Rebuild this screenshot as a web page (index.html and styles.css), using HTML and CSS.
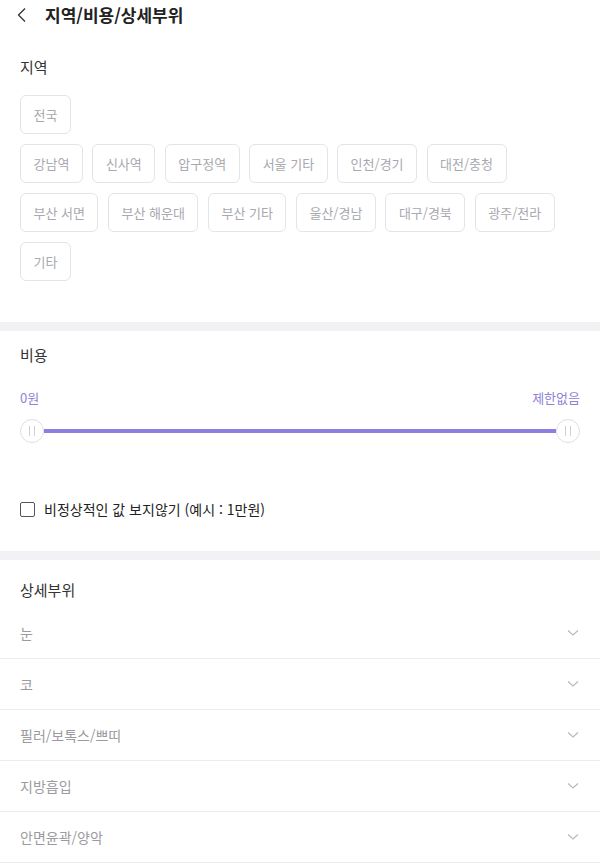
FILE: index.html
```html
<!DOCTYPE html>
<html lang="ko">
<head>
<meta charset="utf-8">
<link rel="stylesheet" href="styles.css">
</head>
<body>
<header class="topbar">
  <svg class="back" width="12" height="16" viewBox="0 0 12 16"><path d="M9 1.5 L2.5 8 L9 14.5" fill="none" stroke="#333" stroke-width="1.3"/></svg>
  <h1 class="title">지역/비용/상세부위</h1>
</header>

<section class="region">
  <h2 class="label">지역</h2>
  <div class="chips chips-top">
    <span class="chip">전국</span>
  </div>
  <div class="chips">
    <span class="chip">강남역</span>
    <span class="chip">신사역</span>
    <span class="chip">압구정역</span>
    <span class="chip">서울 기타</span>
    <span class="chip">인천/경기</span>
    <span class="chip">대전/충청</span>
    <span class="chip">부산 서면</span>
    <span class="chip">부산 해운대</span>
    <span class="chip">부산 기타</span>
    <span class="chip">울산/경남</span>
    <span class="chip">대구/경북</span>
    <span class="chip">광주/전라</span>
    <span class="chip">기타</span>
  </div>
</section>

<div class="band"></div>

<section class="cost">
  <h2 class="label">비용</h2>
  <div class="range-labels">
    <span>0원</span>
    <span>제한없음</span>
  </div>
  <div class="slider">
    <span class="thumb"><i></i><i></i></span>
    <span class="track"></span>
    <span class="thumb"><i></i><i></i></span>
  </div>
  <label class="check">
    <span class="box"></span>
    <span class="check-text">비정상적인 값 보지않기 (예시 : 1만원)</span>
  </label>
</section>

<div class="band"></div>

<section class="parts">
  <h2 class="label">상세부위</h2>
  <ul class="list">
    <li class="item"><span>눈</span><svg class="chev" width="12" height="8" viewBox="0 0 12 8"><path d="M1 1.5 L6 6 L11 1.5" fill="none" stroke="#b9b9bf" stroke-width="1.2"/></svg></li>
    <li class="item"><span>코</span><svg class="chev" width="12" height="8" viewBox="0 0 12 8"><path d="M1 1.5 L6 6 L11 1.5" fill="none" stroke="#b9b9bf" stroke-width="1.2"/></svg></li>
    <li class="item"><span>필러/보톡스/쁘띠</span><svg class="chev" width="12" height="8" viewBox="0 0 12 8"><path d="M1 1.5 L6 6 L11 1.5" fill="none" stroke="#b9b9bf" stroke-width="1.2"/></svg></li>
    <li class="item"><span>지방흡입</span><svg class="chev" width="12" height="8" viewBox="0 0 12 8"><path d="M1 1.5 L6 6 L11 1.5" fill="none" stroke="#b9b9bf" stroke-width="1.2"/></svg></li>
    <li class="item"><span>안면윤곽/양악</span><svg class="chev" width="12" height="8" viewBox="0 0 12 8"><path d="M1 1.5 L6 6 L11 1.5" fill="none" stroke="#b9b9bf" stroke-width="1.2"/></svg></li>
  </ul>
</section>
</body>
</html>
```
FILE: styles.css
```css
* { box-sizing: border-box; }
html, body { margin: 0; padding: 0; background: #fff; }
body {
  font-family: "Noto Sans CJK KR", "Noto Sans", sans-serif;
  color: #222;
  width: 600px;
  overflow: hidden;
}
.topbar {
  height: 30px;
  display: flex;
  align-items: center;
  padding-left: 16px;
}
.back { display: block; margin-right: 17px; }
.title {
  margin: 0;
  font-size: 17px;
  font-weight: 700;
  line-height: 22px;
  color: #222;
}
.label {
  margin: 0;
  font-size: 15px;
  font-weight: 400;
  line-height: 20px;
  color: #333;
}
.region { padding: 27px 20px 41px; }
.region .label { margin-bottom: 18px; }
.chips {
  display: flex;
  flex-wrap: wrap;
  gap: 10px 9.5px;
}
.chips-top { margin-bottom: 10px; }
.chip {
  height: 39px;
  display: inline-flex;
  align-items: center;
  padding: 0 12.5px;
  border: 1px solid #e4e4e8;
  border-radius: 6px;
  font-size: 13px;
  color: #a8a8ae;
  white-space: nowrap;
}
.band { height: 9px; background: #f2f2f4; }
.cost { padding: 14px 20px 32px; }
.range-labels {
  margin-top: 24px;
  display: flex;
  justify-content: space-between;
  font-size: 13px;
  line-height: 18px;
  color: #8d83d6;
}
.slider {
  margin-top: 12px;
  height: 24px;
  display: flex;
  align-items: center;
}
.track {
  flex: 1;
  height: 4px;
  background: #8c7fe2;
}
.thumb {
  width: 24px;
  height: 24px;
  border-radius: 50%;
  border: 1px solid #e0e0e4;
  background: #fff;
  display: flex;
  align-items: center;
  justify-content: center;
  gap: 4px;
  flex: none;
}
.thumb i {
  display: block;
  width: 1px;
  height: 10px;
  background: #cfcfd4;
}
.check {
  margin-top: 56px;
  height: 20px;
  display: flex;
  align-items: center;
}
.box {
  width: 15px;
  height: 15px;
  border: 1.5px solid #555;
  border-radius: 2px;
  margin-right: 9px;
}
.check-text {
  font-size: 14px;
  color: #222;
}
.parts { padding: 20px 0 0; }
.parts .label { padding: 0 20px; margin-bottom: 8px; }
.list { list-style: none; margin: 0; padding: 0; }
.item {
  height: 51px;
  border-bottom: 1px solid #ececee;
  display: flex;
  align-items: center;
  justify-content: space-between;
  padding: 0 21px 0 20px;
  font-size: 14px;
  color: #9a9aa0;
}
.chev { display: block; }
```
